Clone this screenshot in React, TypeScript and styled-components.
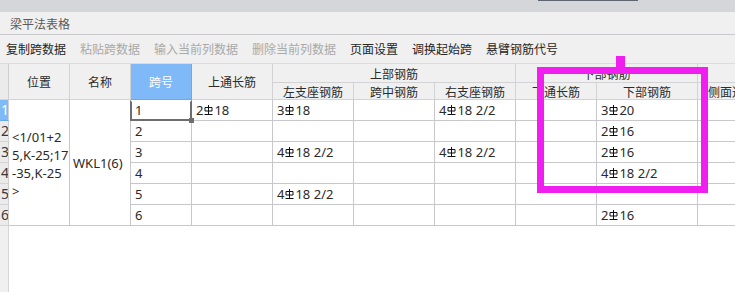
import React from 'react'
import styled, { createGlobalStyle, css } from 'styled-components'

const GlobalStyle = createGlobalStyle`
  html, body {
    margin: 0;
    padding: 0;
    background: #ffffff;
  }
  body {
    font-family: 'Noto Sans', 'Noto Sans CJK SC', sans-serif;
  }
`

type Cell = string

// "C" stands for the HRB400 rebar mark
const bodyRows: Cell[][] = [
  ['2C18', '3C18', '', '4C18 2/2', '', '3C20', '', ''],
  ['', '', '', '', '', '2C16', '', ''],
  ['', '4C18 2/2', '', '4C18 2/2', '', '2C16', '', ''],
  ['', '', '', '', '', '4C18 2/2', '', ''],
  ['', '4C18 2/2', '', '', '', '', '', ''],
  ['', '', '', '', '', '2C16', '', ''],
]

const toolbarItems = [
  { label: '复制跨数据', disabled: false },
  { label: '粘贴跨数据', disabled: true },
  { label: '输入当前列数据', disabled: true },
  { label: '删除当前列数据', disabled: true },
  { label: '页面设置', disabled: false },
  { label: '调换起始跨', disabled: false },
  { label: '悬臂钢筋代号', disabled: false },
]

const RebarMark = () => (
  <MarkSvg viewBox="0 0 9 10" width={9} height={10}>
    <path d="M4.5 0V10M1 2.5H8V6H1ZM0.5 9.5H8.5" fill="none" stroke="#111" strokeWidth={1} />
  </MarkSvg>
)

const RebarText: React.FC<{ value: string }> = ({ value }) => {
  const parts = value.split('C')
  return (
    <>
      {parts.map((p, i) => (
        <React.Fragment key={i}>
          {i > 0 && <RebarMark />}
          {p}
        </React.Fragment>
      ))}
    </>
  )
}

const App: React.FC = () => {
  return (
    <Page>
      <GlobalStyle />
      <TopStrip>
        <StripTab />
      </TopStrip>
      <TitleBar>梁平法表格</TitleBar>
      <Toolbar>
        {toolbarItems.map((t) => (
          <ToolButton key={t.label} $disabled={t.disabled}>
            {t.label}
          </ToolButton>
        ))}
      </Toolbar>
      <Sheet>
        <Gutter $rowSpan={2} />
        <HeadCell $rowSpan={2}>位置</HeadCell>
        <HeadCell $rowSpan={2}>名称</HeadCell>
        <HeadCell $rowSpan={2} $active>跨号</HeadCell>
        <HeadCell $rowSpan={2}>上通长筋</HeadCell>
        <HeadCell $colSpan={3}>上部钢筋</HeadCell>
        <HeadCell $colSpan={2}>下部钢筋</HeadCell>
        <HeadCell $colSpan={2}>侧面钢筋</HeadCell>
        <HeadCell>左支座钢筋</HeadCell>
        <HeadCell>跨中钢筋</HeadCell>
        <HeadCell>右支座钢筋</HeadCell>
        <HeadCell>下通长筋</HeadCell>
        <HeadCell>下部钢筋</HeadCell>
        <HeadCell>侧面通长筋</HeadCell>
        <HeadCell>侧面受扭筋</HeadCell>

        {bodyRows.map((row, r) => (
          <React.Fragment key={r}>
            <Gutter $selected={r === 0}>{r + 1}</Gutter>
            {r === 0 && (
              <>
                <MergedCell $rowSpan={6}>
                  &lt;1/01+2
                  <br />
                  5,K-25;17
                  <br />
                  -35,K-25
                  <br />
                  &gt;
                </MergedCell>
                <NameCell $rowSpan={6}>WKL1(6)</NameCell>
              </>
            )}
            <DataCell $current={r === 0}>{r + 1}</DataCell>
            {row.map((v, c) => (
              <DataCell key={c}>{v && <RebarText value={v} />}</DataCell>
            ))}
          </React.Fragment>
        ))}
        <GutterFill />
      </Sheet>
      <HighlightBox />
      <HighlightTick />
    </Page>
  )
}

const Page = styled.div`
  position: relative;
  width: 735px;
  height: 292px;
  overflow: hidden;
  display: flex;
  flex-direction: column;
  background: #ffffff;
`

const TopStrip = styled.div`
  height: 12px;
  flex: none;
  background: #d5d6da;
  padding-left: 538px;
  box-sizing: border-box;
`

const StripTab = styled.div`
  width: 100px;
  height: 1px;
  background: #5d6571;
`

const TitleBar = styled.div`
  height: 23px;
  flex: none;
  box-sizing: border-box;
  display: flex;
  align-items: center;
  padding-left: 10px;
  background: #f0f0f0;
  border-bottom: 1px solid #c9c9cc;
  font-family: 'Noto Sans CJK SC', sans-serif;
  font-size: 12px;
  color: #5a5a5a;
`

const Toolbar = styled.div`
  height: 29px;
  flex: none;
  box-sizing: border-box;
  display: flex;
  align-items: center;
  gap: 14px;
  padding: 0 0 1px 6px;
  background: #f0f0f0;
  border-bottom: 1px solid #dcdcdc;
`

const ToolButton = styled.span<{ $disabled: boolean }>`
  font-family: 'Noto Sans CJK SC', sans-serif;
  font-size: 12px;
  white-space: nowrap;
  color: ${(p) => (p.$disabled ? '#a9a9a9' : '#262626')};
`

const Sheet = styled.div`
  flex: 1;
  display: grid;
  grid-template-columns: 9px 61px 61px 61px 81px 81px 81px 81px 81px 101px 81px 81px;
  grid-template-rows: 19px 17px repeat(6, 21px) 1fr;
  width: 860px;
`

type SpanProps = { $rowSpan?: number; $colSpan?: number }

const spans = css<SpanProps>`
  ${(p) => p.$rowSpan && `grid-row: span ${p.$rowSpan};`}
  ${(p) => p.$colSpan && `grid-column: span ${p.$colSpan};`}
`

const Gutter = styled.div<SpanProps & { $selected?: boolean }>`
  ${spans}
  box-sizing: border-box;
  overflow: hidden;
  border-right: 1px solid #cfcfd2;
  border-bottom: 1px solid ${(p) => (p.$selected ? '#6aa8f0' : '#d4d4d6')};
  background: ${(p) => (p.$selected ? '#80b9f8' : '#ebebeb')};
  color: ${(p) => (p.$selected ? '#ffffff' : '#3a3a3a')};
  font-size: 14px;
  line-height: 20px;
  padding-left: 1px;
`

const GutterFill = styled.div`
  background: #f0f0f0;
  border-right: 1px solid #d6d6d8;
`

const HeadCell = styled.div<SpanProps & { $active?: boolean }>`
  ${spans}
  box-sizing: border-box;
  display: flex;
  align-items: center;
  justify-content: center;
  white-space: nowrap;
  overflow: hidden;
  font-family: 'Noto Sans CJK SC', sans-serif;
  font-size: 12px;
  background: ${(p) => (p.$active ? '#80b9f8' : '#f0f0f0')};
  color: ${(p) => (p.$active ? '#ffffff' : '#2b2b2b')};
  border-right: 1px solid ${(p) => (p.$active ? '#6aa8f0' : '#d3d3d5')};
  border-bottom: 1px solid ${(p) => (p.$active ? '#6aa8f0' : '#d3d3d5')};
`

const DataCell = styled.div<{ $current?: boolean }>`
  position: relative;
  box-sizing: border-box;
  display: flex;
  align-items: center;
  padding: 0 4px;
  white-space: nowrap;
  font-size: 13px;
  color: #2a2a2a;
  background: #ffffff;
  border-right: 1px solid #c8c8cc;
  border-bottom: 1px solid #c8c8cc;

  ${(p) =>
    p.$current &&
    css`
      &::after {
        content: '';
        position: absolute;
        left: -1px;
        top: 0;
        right: -1px;
        bottom: -1px;
        border: 2px solid #6e6e6e;
        border-top-color: transparent;
      }
      &::before {
        content: '';
        position: absolute;
        right: -3px;
        bottom: -3px;
        width: 5px;
        height: 5px;
        background: #6e6e6e;
        z-index: 1;
      }
    `}
`

const MergedCell = styled.div<SpanProps>`
  ${spans}
  box-sizing: border-box;
  display: flex;
  align-items: center;
  padding: 2px 0 0 3px;
  font-size: 13px;
  line-height: 18px;
  white-space: nowrap;
  color: #2a2a2a;
  border-right: 1px solid #c8c8cc;
  border-bottom: 1px solid #c8c8cc;
`

const NameCell = styled(MergedCell)`
  padding: 0 0 0 3px;
`

const MarkSvg = styled.svg`
  display: inline-block;
  vertical-align: 3px;
  margin: 0 1px 0 1px;
`

const HighlightBox = styled.div`
  position: absolute;
  left: 537px;
  top: 67px;
  width: 171px;
  height: 126px;
  box-sizing: border-box;
  border: 7px solid #f01ff0;
  pointer-events: none;
`

const HighlightTick = styled.div`
  position: absolute;
  left: 616px;
  top: 56px;
  width: 9px;
  height: 11px;
  background: #f01ff0;
`

export default App
